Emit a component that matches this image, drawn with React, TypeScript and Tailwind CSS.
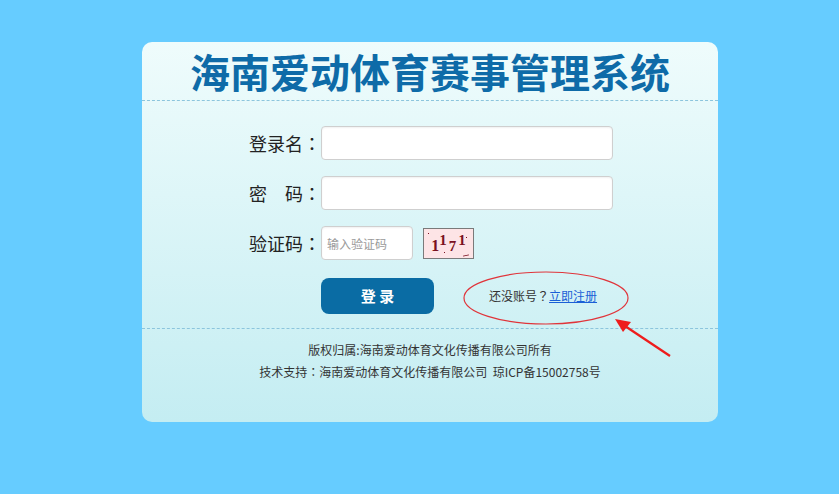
import React from "react";

const font = { fontFamily: '"Microsoft YaHei", "Noto Sans CJK SC", "Noto Sans", sans-serif' };

// centred full-width punctuation, as in the reference font
function P({ children }: { children: React.ReactNode }) {
  return <span className="font-['Noto_Sans_CJK_TC',sans-serif]">{children}</span>;
}

function Captcha() {
  return (
    <div className="relative ml-[10px] flex h-[31px] w-[51px] items-center justify-center border border-[#7a7a7a] bg-[#fde4e6] font-['Liberation_Serif',serif] font-bold text-[#7a1020]">
      <span className="relative top-[3px] text-[16px]">1</span>
      <span className="relative -top-[3px] text-[15px]">1</span>
      <span className="relative top-[3px] mx-[2px] text-[15px]">7</span>
      <span className="relative -top-[3px] text-[15px]">1</span>
      <span className="absolute left-[4px] top-[4px] h-[1px] w-[1px] bg-[#7a1020]" />
      <span className="absolute right-[6px] top-[8px] h-[1px] w-[1px] bg-[#7a1020]" />
      <span className="absolute left-[20px] bottom-[5px] h-[1px] w-[1px] bg-[#7a1020]" />
      <span className="absolute right-[4px] bottom-[2px] h-[1px] w-[6px] -rotate-12 bg-[#7a1020]" />
    </div>
  );
}

function Field({ label, children }: { label: React.ReactNode; children: React.ReactNode }) {
  return (
    <div className="flex h-[34px] items-center">
      <div className="w-[179px] text-right text-[18px] text-[#222]">{label}</div>
      {children}
    </div>
  );
}

const inputCls =
  "h-[34px] rounded-[4px] border border-[#cfcfcf] bg-white shadow-[inset_0_1px_2px_rgba(0,0,0,0.06)] outline-none";

export default function App() {
  return (
    <div className="min-h-[494px] w-full bg-[#66ccff] pt-[42px]" style={font}>
      <div className="relative ml-[142px] h-[380px] w-[576px] rounded-[10px] bg-gradient-to-b from-[#effcfc] to-[#c4edf2]">
        <div className="flex h-[59px] items-center justify-center border-b border-dashed border-[#8cc5dd]">
          <h1 className="pb-[1px] text-[40px] font-bold leading-none text-[#0e6ba8]">
            海南爱动体育赛事管理系统
          </h1>
        </div>

        <div className="flex flex-col gap-[16px] pt-[25px]">
          <Field label={<>登录名<P>：</P></>}>
            <input className={`${inputCls} w-[292px]`} />
          </Field>
          <Field label={<>密<span className="inline-block w-[18px]" />码<P>：</P></>}>
            <input className={`${inputCls} w-[292px]`} />
          </Field>
          <Field label={<>验证码<P>：</P></>}>
            <input
              placeholder="输入验证码"
              className={`${inputCls} w-[92px] pl-[5px] text-[12px] placeholder:text-[#9a9a9a]`}
            />
            <Captcha />
          </Field>
        </div>

        <div className="mt-[18px] flex h-[36px] items-center pl-[179px]">
          <button className="h-[36px] w-[113px] rounded-[8px] bg-[#0a6ca4] text-[15px] font-bold text-white">
            登 录
          </button>
          <div className="ml-[55px] text-[12px] text-[#333]">
            还没账号<P>？</P><a className="text-[#1a5fd6] underline">立即注册</a>
          </div>
        </div>

        <div className="mt-[14px] border-t border-dashed border-[#8cc5dd] pt-[10px] text-center text-[12px] leading-[22px] text-[#333]">
          <p>版权归属:海南爱动体育文化传播有限公司所有</p>
          <p>
            技术支持<P>：</P>海南爱动体育文化传播有限公司&nbsp;&nbsp;琼ICP备15002758号
          </p>
        </div>

        <svg className="pointer-events-none absolute left-0 top-0" width="576" height="380" viewBox="0 0 576 380">
          <ellipse cx="404" cy="256" rx="82" ry="26" fill="none" stroke="#e0343a" strokeWidth="1.2" />
          <line x1="528" y1="314" x2="480" y2="282" stroke="#ee1c1c" strokeWidth="2.2" />
          <polygon points="473,277 489,280 481,290" fill="#ee1c1c" />
        </svg>
      </div>
    </div>
  );
}
